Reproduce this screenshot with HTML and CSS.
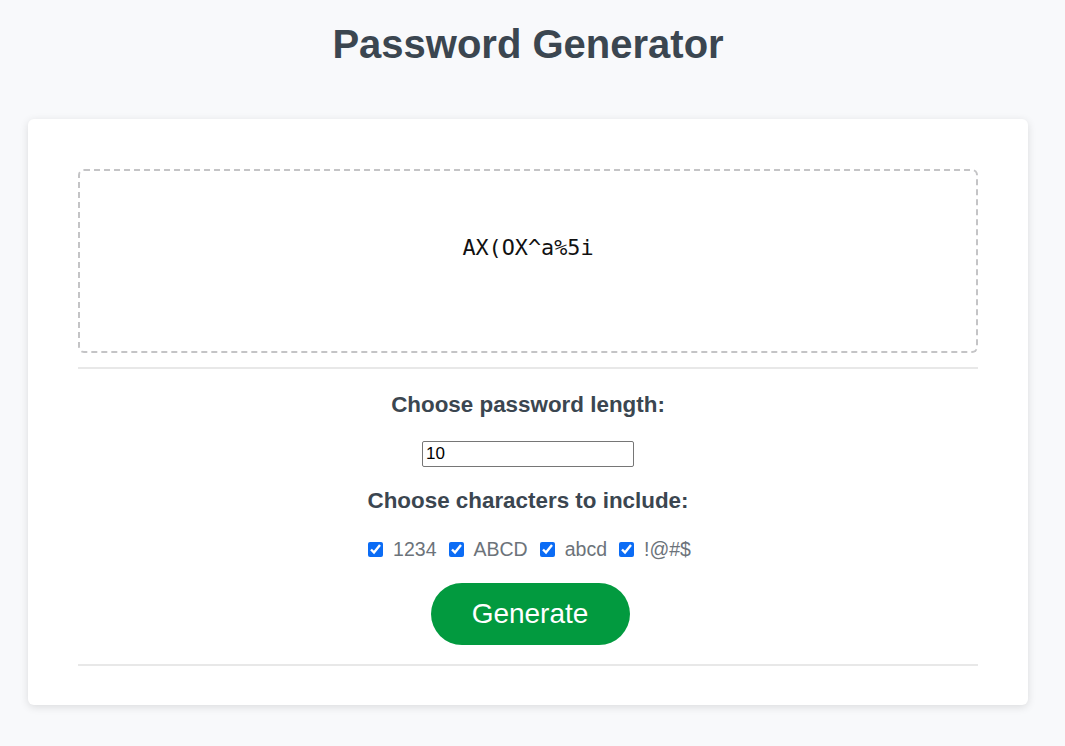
FILE: index.html
```html
<!DOCTYPE html>
<html>
<head>
<meta charset="utf-8">
<link rel="stylesheet" href="styles.css">
</head>
<body>
<h1 class="title">Password Generator</h1>
<div class="card">
  <div class="output"><span class="password">AX(OX^a%5i</span></div>
  <hr class="rule">
  <div class="controls">
    <h2 class="label">Choose password length:</h2>
    <input class="length" type="text" value="10">
    <h2 class="label">Choose characters to include:</h2>
    <div class="options">
      <label class="opt"><input type="checkbox" checked><span>1234</span></label>
      <label class="opt"><input type="checkbox" checked><span>ABCD</span></label>
      <label class="opt"><input type="checkbox" checked><span>abcd</span></label>
      <label class="opt"><input type="checkbox" checked><span>!@#$</span></label>
    </div>
    <button class="generate">Generate</button>
  </div>
  <hr class="rule">
</div>
</body>
</html>
```

FILE: styles.css
```css
html, body {
  margin: 0;
  padding: 0;
}
body {
  background: #f8f9fb;
  font-family: "Liberation Sans", Arial, sans-serif;
  color: #3b4650;
  padding: 20px 9px 40px 0;
}
.title {
  margin: 0;
  text-align: center;
  font-size: 40px;
  line-height: 48px;
  font-weight: bold;
  color: #3b4650;
}
.card {
  width: 900px;
  margin: 51px auto 0;
  background: #fff;
  border-radius: 6px;
  box-shadow: 0 2px 8px rgba(0,0,0,0.12);
  padding: 50px 50px 39px;
}
.output {
  height: 180px;
  box-sizing: content-box;
  border: 2px dashed #c4c4c6;
  border-radius: 6px;
  display: flex;
  align-items: center;
  justify-content: center;
}
.password {
  font-family: "DejaVu Sans Mono", "Liberation Mono", monospace;
  font-size: 21.8px;
  line-height: 26px;
  color: #111;
  margin-bottom: 26px;
}
.rule {
  border: 0;
  height: 2px;
  background: #e8e8e8;
  margin: 14px 0 0;
}
.controls {
  display: flex;
  flex-direction: column;
  align-items: center;
  padding: 24px 0 5px;
}
.label {
  margin: 0;
  font-size: 22.4px;
  line-height: 24px;
  font-weight: bold;
  color: #3b4650;
}
.length {
  margin: 24px 0 22px;
  width: 212px;
  height: 26px;
  box-sizing: border-box;
  border: 1px solid #767676;
  border-radius: 2px;
  padding: 0 3px;
  font-family: "Liberation Sans", Arial, sans-serif;
  font-size: 17px;
  color: #000;
}
.options {
  margin-top: 25px;
  margin-left: 3px;
  display: flex;
  gap: 12px;
  align-items: center;
}
.opt {
  display: flex;
  align-items: center;
  gap: 10px;
  font-size: 19.5px;
  color: #6c737a;
}
.opt input {
  margin: 0;
  width: 15px;
  height: 15px;
  accent-color: #0b6cf5;
}
.generate {
  margin-top: 22px;
  margin-left: 4px;
  width: 199px;
  height: 62px;
  border: 0;
  border-radius: 31px;
  background: #029a3f;
  color: #fff;
  font-family: "Liberation Sans", Arial, sans-serif;
  font-size: 28px;
}
```
